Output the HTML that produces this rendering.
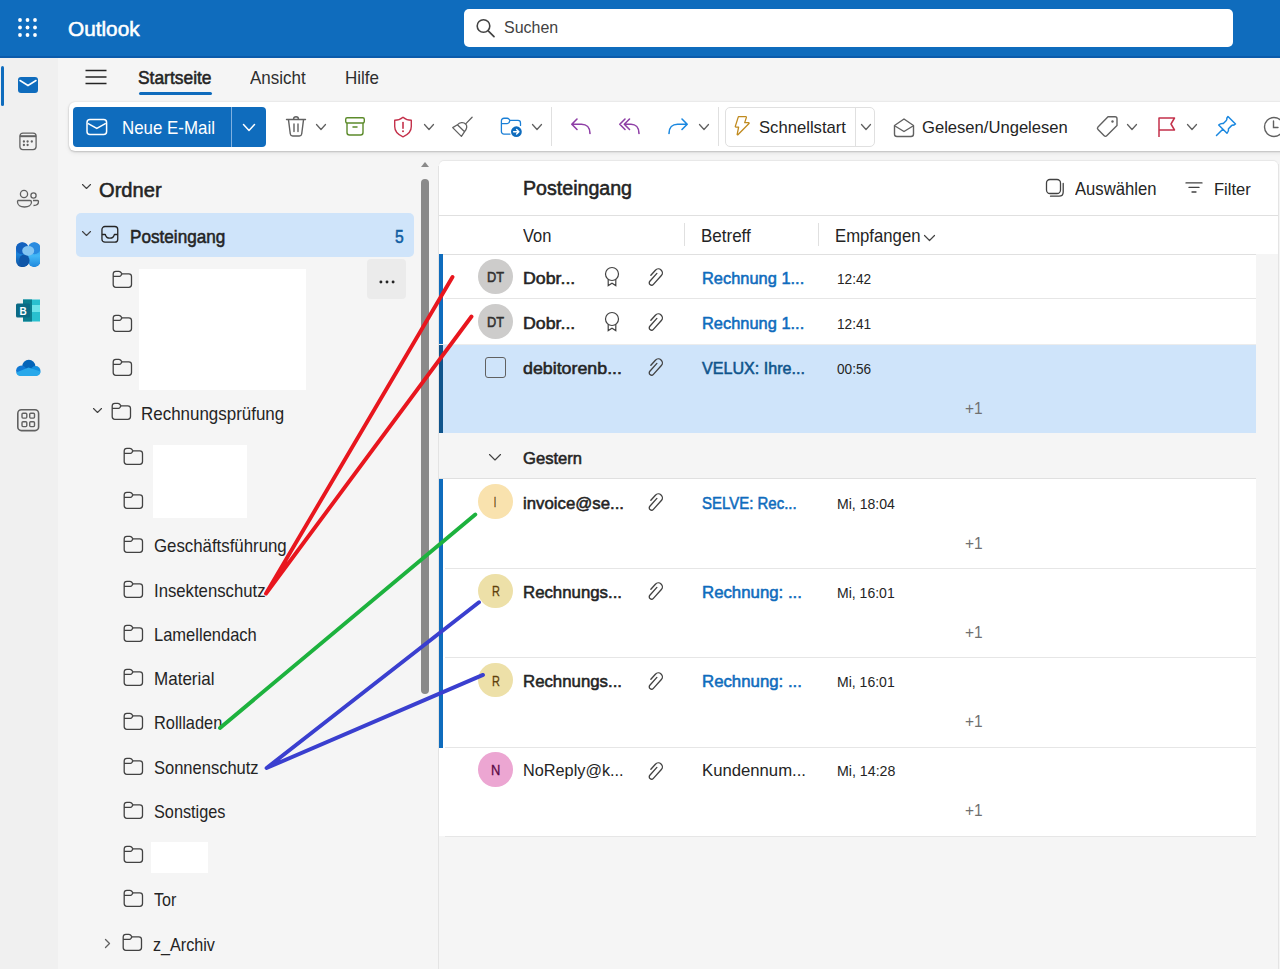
<!DOCTYPE html><html><head><meta charset="utf-8"><style>
*{box-sizing:border-box}
html,body{margin:0;padding:0}
body{width:1280px;height:969px;overflow:hidden;position:relative;background:#f5f5f5;font-family:"Liberation Sans",sans-serif}
.a{position:absolute;display:block}
.t{position:absolute;white-space:pre;transform-origin:0 0}
</style></head><body>
<div class="a" style="left:0px;top:0px;width:1280px;height:58px;background:#0f6cbd"></div>
<div class="a" style="left:0px;top:56px;width:1280px;height:2px;background:#0b5bab"></div>
<svg class="a" style="left:0px;top:0px;" width="56" height="56" viewBox="0 0 56 56" fill="none"><circle cx="20" cy="20" r="1.9" fill="#fff"/><circle cx="20" cy="27.5" r="1.9" fill="#fff"/><circle cx="20" cy="35" r="1.9" fill="#fff"/><circle cx="27.5" cy="20" r="1.9" fill="#fff"/><circle cx="27.5" cy="27.5" r="1.9" fill="#fff"/><circle cx="27.5" cy="35" r="1.9" fill="#fff"/><circle cx="35" cy="20" r="1.9" fill="#fff"/><circle cx="35" cy="27.5" r="1.9" fill="#fff"/><circle cx="35" cy="35" r="1.9" fill="#fff"/></svg>
<span class="t" style="left:67.60px;top:19px;font-size:20.0px;line-height:20.0px;font-weight:400;color:#ffffff;-webkit-text-stroke:0.55px #ffffff;transform:scale(1.0383,1.0000);transform-origin:0 17px;">Outlook</span>
<div class="a" style="left:464px;top:9px;width:769px;height:38px;background:#fff;border-radius:5px"></div>
<svg class="a" style="left:470px;top:13px;" width="30" height="30" viewBox="0 0 30 30" fill="none"><circle cx="13.5" cy="13" r="6.3" stroke="#424242" stroke-width="1.6"/><path d="M18.2 17.8 L24 23.6" stroke="#424242" stroke-width="1.7" stroke-linecap="round"/></svg>
<span class="t" style="left:503.60px;top:19px;font-size:17.0px;line-height:17.0px;font-weight:400;color:#424242;transform:scale(0.9399,1.0000);transform-origin:0 14px;">Suchen</span>
<div class="a" style="left:0px;top:58px;width:58px;height:911px;background:#f0f0f0"></div>
<div class="a" style="left:1px;top:66px;width:2.5px;height:40px;background:#0f6cbd;border-radius:2px"></div>
<svg class="a" style="left:16px;top:75px;" width="24" height="20" viewBox="0 0 24 20" fill="none"><rect x="2" y="2" width="20" height="16" rx="3" fill="#0f6cbd"/><path d="M4 5.5 L12 10.5 L20 5.5" stroke="#fff" stroke-width="1.5" fill="none" stroke-linecap="round"/></svg>
<svg class="a" style="left:17px;top:130px;" width="22" height="22" viewBox="0 0 22 22" fill="none"><rect x="2.9" y="3.2" width="16.2" height="16.4" rx="3" stroke="#616161" stroke-width="1.3"/><path d="M2.9 6.2 H19.1" stroke="#616161" stroke-width="2"/><g fill="#616161"><circle cx="6.9" cy="11.5" r="1.15"/><circle cx="10.6" cy="11.5" r="1.15"/><circle cx="14.8" cy="11.5" r="1.15"/><circle cx="6.9" cy="15" r="1.15"/><circle cx="10.6" cy="15" r="1.15"/></g></svg>
<svg class="a" style="left:15px;top:187px;" width="26" height="24" viewBox="0 0 26 24" fill="none"><circle cx="9" cy="7" r="3.6" stroke="#616161" stroke-width="1.3"/><circle cx="18.5" cy="8.5" r="2.6" stroke="#616161" stroke-width="1.3"/><path d="M3 13.5 H15 A1.5 1.5 0 0 1 16.5 15 C16.5 18 13.5 20 9.5 20 S2.5 18 2.5 15 A1.5 1.5 0 0 1 3 13.5Z" stroke="#616161" stroke-width="1.3"/><path d="M18 13.5 H22.5 A1 1 0 0 1 23.5 14.5 C23.5 17 21.5 18.5 18.5 18.5" stroke="#616161" stroke-width="1.3"/></svg>
<svg class="a" style="left:15.7px;top:241.7px;" width="24.5" height="25.2" viewBox="0 0 24.5 25.2" fill="none"><defs><linearGradient id="gl" x1="0" y1="0" x2="0" y2="1"><stop offset="0" stop-color="#1560bd"/><stop offset="0.5" stop-color="#1b82d8"/><stop offset="1" stop-color="#0d4f9e"/></linearGradient><linearGradient id="gr" x1="0" y1="0" x2="0" y2="1"><stop offset="0" stop-color="#2a8be0"/><stop offset="0.55" stop-color="#43b8f7"/><stop offset="1" stop-color="#2088dc"/></linearGradient></defs><rect x="0" y="0.3" width="12.6" height="24.8" rx="6.2" fill="url(#gl)"/><rect x="12" y="0.3" width="12.4" height="24.8" rx="6.1" fill="url(#gr)"/><circle cx="6" cy="6.3" r="5.9" fill="#1462bf"/><circle cx="18.4" cy="6.3" r="5.9" fill="#2a8be0"/><ellipse cx="8.3" cy="18.6" rx="5.2" ry="6" fill="#0f56a8"/><ellipse cx="12.2" cy="8.8" rx="6" ry="4.9" fill="#84c5f2"/></svg>
<svg class="a" style="left:15px;top:298px;" width="26" height="25" viewBox="0 0 26 25" fill="none"><rect x="8" y="1.5" width="17" height="22" fill="#29c0cf"/><rect x="17" y="7" width="8" height="7" fill="#6ce3e9"/><rect x="8" y="1.5" width="9" height="22" fill="#0c7d8e"/><rect x="1" y="5.5" width="14" height="14" rx="1.5" fill="#0b6a85"/><text x="8" y="16.5" font-family="Liberation Sans" font-weight="700" font-size="10" fill="#fff" text-anchor="middle">B</text></svg>
<svg class="a" style="left:15px;top:357px;" width="26" height="20" viewBox="0 0 26 20" fill="none"><circle cx="13.8" cy="9.3" r="6.6" fill="#0364b8"/><circle cx="6.3" cy="13.6" r="5.2" fill="#0f78d4"/><circle cx="20.6" cy="13.9" r="4.9" fill="#1490df"/><path d="M1.2 15.5 L13.5 10.5 L25.4 14.5 V15 C25.4 17.2 23.6 18.9 21.5 18.9 H5.5 C3.2 18.9 1.4 17.5 1.2 15.5 Z" fill="#28a8ea"/></svg>
<svg class="a" style="left:15px;top:408px;" width="26" height="25" viewBox="0 0 26 25" fill="none"><rect x="2.8" y="1.8" width="20.8" height="20.8" rx="3.6" stroke="#616161" stroke-width="1.6"/><g stroke="#616161" stroke-width="1.4"><rect x="7" y="5.3" width="4.8" height="4.8" rx="1"/><rect x="14.7" y="5.3" width="4.8" height="4.8" rx="1"/><rect x="7" y="13.8" width="4.8" height="4.8" rx="1"/><rect x="14.7" y="13.8" width="4.8" height="4.8" rx="1"/></g></svg>
<svg class="a" style="left:84px;top:68px;" width="24" height="18" viewBox="0 0 24 18" fill="none"><path d="M1.5 2.5 H22.5 M1.5 9 H22.5 M1.5 15.5 H22.5" stroke="#242424" stroke-width="1.4"/></svg>
<span class="t" style="left:138.00px;top:69px;font-size:18.5px;line-height:18.5px;font-weight:400;color:#242424;-webkit-text-stroke:0.55px #242424;transform:scale(0.9406,1.0000);transform-origin:0 15px;">Startseite</span>
<div class="a" style="left:139px;top:92px;width:73px;height:3px;background:#0f6cbd;border-radius:2px"></div>
<span class="t" style="left:249.70px;top:69px;font-size:18.5px;line-height:18.5px;font-weight:400;color:#2e2e2e;transform:scale(0.9166,1.0000);transform-origin:0 15px;">Ansicht</span>
<span class="t" style="left:345.00px;top:69px;font-size:18.5px;line-height:18.5px;font-weight:400;color:#2e2e2e;transform:scale(0.9185,1.0000);transform-origin:0 15px;">Hilfe</span>
<div class="a" style="left:68.7px;top:102px;width:1240px;height:49px;background:#fff;border-radius:6px;box-shadow:0 0 2px rgba(0,0,0,0.12),0 1px 2px rgba(0,0,0,0.14),0 2px 5px rgba(0,0,0,0.07)"></div>
<div class="a" style="left:73px;top:107px;width:193px;height:39.5px;background:#0f6cbd;border-radius:4px"></div>
<div class="a" style="left:230.6px;top:107px;width:1.4px;height:39.5px;background:#7fb0e0"></div>
<svg class="a" style="left:84px;top:116px;" width="26" height="22" viewBox="0 0 26 22" fill="none"><rect x="3" y="3.6" width="19.6" height="15" rx="3" stroke="#fff" stroke-width="1.5"/><path d="M3.8 7.3 L12.8 12.4 L21.8 7.3" stroke="#fff" stroke-width="1.5"/></svg>
<span class="t" style="left:121.50px;top:119px;font-size:18.5px;line-height:18.5px;font-weight:400;color:#ffffff;transform:scale(0.9127,1.0000);transform-origin:0 15px;">Neue E-Mail</span>
<svg class="a" style="left:242px;top:123px;" width="14" height="9" viewBox="-1 -1 14 9" fill="none"><path d="M0.5 0.5 L6.0 6.5 L11.5 0.5" stroke="#ffffff" stroke-width="1.5" stroke-linecap="round" stroke-linejoin="round"/></svg>
<svg class="a" style="left:284px;top:115px;" width="24" height="23" viewBox="0 0 24 23" fill="none"><path d="M2.5 4.5 H21.5 M9.5 4.3 C9.5 2.5 10.5 1.8 12 1.8 S14.5 2.5 14.5 4.3" stroke="#616161" stroke-width="1.4" stroke-linecap="round"/><path d="M4.5 4.8 L6.3 19 C6.5 20.3 7.5 21 8.7 21 H15.3 C16.5 21 17.5 20.3 17.7 19 L19.5 4.8" stroke="#616161" stroke-width="1.4"/><path d="M10 9 V16.5 M14 9 V16.5" stroke="#616161" stroke-width="1.4" stroke-linecap="round"/></svg>
<svg class="a" style="left:315px;top:123px;" width="12" height="8" viewBox="-1 -1 12 8" fill="none"><path d="M0.5 0.5 L5.0 5.5 L9.5 0.5" stroke="#616161" stroke-width="1.3" stroke-linecap="round" stroke-linejoin="round"/></svg>
<svg class="a" style="left:343px;top:116px;" width="24" height="21" viewBox="0 0 24 21" fill="none"><rect x="2.7" y="1.8" width="18.6" height="5.2" rx="1.5" stroke="#5c8b2b" stroke-width="1.4"/><path d="M4 7 V16.5 C4 18 5 19 6.5 19 H17.5 C19 19 20 18 20 16.5 V7" stroke="#5c8b2b" stroke-width="1.4"/><path d="M10 11 H14" stroke="#5c8b2b" stroke-width="1.5" stroke-linecap="round"/></svg>
<svg class="a" style="left:391px;top:115px;" width="24" height="24" viewBox="0 0 24 24" fill="none"><path d="M12 2.2 C14.5 4.3 17.3 5.3 20.3 5.3 V11.5 C20.3 16.3 17.3 19.6 12 21.8 C6.7 19.6 3.7 16.3 3.7 11.5 V5.3 C6.7 5.3 9.5 4.3 12 2.2Z" stroke="#c4314b" stroke-width="1.4" stroke-linejoin="round"/><path d="M12 7.5 V13.2" stroke="#c4314b" stroke-width="1.6" stroke-linecap="round"/><circle cx="12" cy="16.3" r="1" fill="#c4314b"/></svg>
<svg class="a" style="left:423px;top:123px;" width="12" height="8" viewBox="-1 -1 12 8" fill="none"><path d="M0.5 0.5 L5.0 5.5 L9.5 0.5" stroke="#616161" stroke-width="1.3" stroke-linecap="round" stroke-linejoin="round"/></svg>
<svg class="a" style="left:450px;top:114px;" width="26" height="25" viewBox="0 0 26 25" fill="none"><path d="M22.1 3.3 L15.9 9.6" stroke="#616161" stroke-width="1.3" stroke-linecap="round"/><path d="M2.7 13.6 L7.4 10.8 C9.5 8.3 13.5 7.6 15.8 10.2 C17.6 12.4 16.4 15.4 14.6 17.7 L11.4 22.4 Z M7.4 10.8 L14.6 17.7" stroke="#616161" stroke-width="1.3" stroke-linejoin="round"/></svg>
<svg class="a" style="left:499px;top:115px;" width="26" height="25" viewBox="0 0 26 25" fill="none"><path d="M10.9 19.2 H5 C3.5 19.2 2.4 18 2.4 16.5 V6 C2.4 4.5 3.5 3.25 5 3.25 H8.2 C8.9 3.25 9.5 3.6 10 4.1 L10.9 5.4 H19 C20.4 5.4 21.5 6.5 21.5 8 V10.4 M2.4 8.6 H8.2 C8.9 8.6 9.5 8.3 10 7.7 L10.9 5.4" stroke="#1b7fd6" stroke-width="1.3" stroke-linejoin="round" stroke-linecap="round"/><circle cx="17.4" cy="16.7" r="5.4" fill="#0f6cbd"/><path d="M14.6 16.7 H19.8 M17.6 14.4 L19.9 16.7 L17.6 19" stroke="#fff" stroke-width="1.4" stroke-linecap="round" stroke-linejoin="round"/></svg>
<svg class="a" style="left:530.5px;top:123px;" width="12" height="8" viewBox="-1 -1 12 8" fill="none"><path d="M0.5 0.5 L5.0 5.5 L9.5 0.5" stroke="#616161" stroke-width="1.3" stroke-linecap="round" stroke-linejoin="round"/></svg>
<div class="a" style="left:551px;top:107px;width:1px;height:39px;background:#e0e0e0"></div>
<svg class="a" style="left:569px;top:116px;" width="24" height="20" viewBox="0 0 24 20" fill="none"><path d="M8 3 L2.8 8.3 L8 13.5 M3.2 8.3 H12.5 C17.5 8.3 21 11.5 21 17.5" stroke="#8e3ea6" stroke-width="1.6" stroke-linecap="round" stroke-linejoin="round"/></svg>
<svg class="a" style="left:618px;top:116px;" width="24" height="20" viewBox="0 0 24 20" fill="none"><path d="M7 3 L1.8 8.3 L7 13.5 M11.5 3 L6.3 8.3 L11.5 13.5 M6.7 8.3 H13 C17.5 8.3 21 11.5 21 17.5" stroke="#8e3ea6" stroke-width="1.6" stroke-linecap="round" stroke-linejoin="round"/></svg>
<svg class="a" style="left:666px;top:116px;" width="24" height="20" viewBox="0 0 24 20" fill="none"><path d="M16 3 L21.2 8.3 L16 13.5 M20.8 8.3 H11.5 C6.5 8.3 3 11.5 3 17.5" stroke="#1b88e0" stroke-width="1.6" stroke-linecap="round" stroke-linejoin="round"/></svg>
<svg class="a" style="left:698px;top:123px;" width="12" height="8" viewBox="-1 -1 12 8" fill="none"><path d="M0.5 0.5 L5.0 5.5 L9.5 0.5" stroke="#616161" stroke-width="1.3" stroke-linecap="round" stroke-linejoin="round"/></svg>
<div class="a" style="left:718px;top:107px;width:1px;height:39px;background:#e0e0e0"></div>
<div class="a" style="left:725px;top:107px;width:150px;height:39.5px;border:1px solid #e0e0e0;border-radius:5px;background:#fff"></div>
<div class="a" style="left:855px;top:108px;width:1px;height:37.5px;background:#e0e0e0"></div>
<svg class="a" style="left:732px;top:114px;" width="22" height="24" viewBox="0 0 22 24" fill="none"><path d="M6.4 2.6 H13.8 C14.2 2.6 14.5 3 14.4 3.4 L12.7 8.6 H16.6 C17.1 8.6 17.3 9.2 17 9.5 L5.9 20.7 C5.6 21 5.1 20.7 5.2 20.3 L6.6 13.1 H3.9 C3.5 13.1 3.2 12.8 3.3 12.4 Z" stroke="#c08a1e" stroke-width="1.3" stroke-linejoin="round"/></svg>
<span class="t" style="left:759.00px;top:119px;font-size:17.0px;line-height:17.0px;font-weight:400;color:#242424;transform:scale(0.9795,1.0000);transform-origin:0 14px;">Schnellstart</span>
<svg class="a" style="left:859.6px;top:123px;" width="12" height="8" viewBox="-1 -1 12 8" fill="none"><path d="M0.5 0.5 L5.0 5.5 L9.5 0.5" stroke="#616161" stroke-width="1.3" stroke-linecap="round" stroke-linejoin="round"/></svg>
<svg class="a" style="left:892px;top:116px;" width="24" height="23" viewBox="0 0 24 23" fill="none"><path d="M2.5 9.5 L12 3 L21.5 9.5 V18 C21.5 19.5 20.5 20.5 19 20.5 H5 C3.5 20.5 2.5 19.5 2.5 18 Z" stroke="#616161" stroke-width="1.4" stroke-linejoin="round"/><path d="M3 10 L12 15.5 L21 10" stroke="#616161" stroke-width="1.4"/></svg>
<span class="t" style="left:922.00px;top:119px;font-size:17.0px;line-height:17.0px;font-weight:400;color:#242424;transform:scale(0.9764,1.0000);transform-origin:0 14px;">Gelesen/Ungelesen</span>
<svg class="a" style="left:1095px;top:114px;" width="25" height="24" viewBox="0 0 25 24" fill="none"><path d="M13 2.8 H20 C21.2 2.8 22 3.6 22 4.8 V11.5 L11.7 21.8 C11 22.5 9.9 22.5 9.2 21.8 L3 15.6 C2.3 14.9 2.3 13.8 3 13.1 Z" stroke="#616161" stroke-width="1.4" stroke-linejoin="round"/><circle cx="17.5" cy="7.5" r="1.2" fill="#616161"/></svg>
<svg class="a" style="left:1126px;top:123px;" width="12" height="8" viewBox="-1 -1 12 8" fill="none"><path d="M0.5 0.5 L5.0 5.5 L9.5 0.5" stroke="#616161" stroke-width="1.3" stroke-linecap="round" stroke-linejoin="round"/></svg>
<svg class="a" style="left:1156px;top:115px;" width="22" height="24" viewBox="0 0 22 24" fill="none"><path d="M3 22 V3 H18.5 L15 9 L18.5 15 H3" stroke="#c4314b" stroke-width="1.5" stroke-linejoin="round"/></svg>
<svg class="a" style="left:1186px;top:123px;" width="12" height="8" viewBox="-1 -1 12 8" fill="none"><path d="M0.5 0.5 L5.0 5.5 L9.5 0.5" stroke="#616161" stroke-width="1.3" stroke-linecap="round" stroke-linejoin="round"/></svg>
<svg class="a" style="left:1214px;top:114px;" width="24" height="24" viewBox="0 0 24 24" fill="none"><path d="M14 2.5 L21.5 10 L19.8 11.2 C19 11 18 11.2 17.3 11.9 L14.5 14.7 C14.8 16.3 14.3 18 13 19.3 L4.7 11 C6 9.7 7.7 9.2 9.3 9.5 L12.1 6.7 C12.8 6 13 5 12.8 4.2 Z M8.8 15.2 L2.5 21.5" stroke="#1b88e0" stroke-width="1.5" stroke-linejoin="round" stroke-linecap="round"/></svg>
<svg class="a" style="left:1262px;top:115px;" width="24" height="24" viewBox="0 0 24 24" fill="none"><circle cx="12" cy="12" r="9.5" stroke="#616161" stroke-width="1.4"/><path d="M11.5 6 V12.5 H16" stroke="#616161" stroke-width="1.4" stroke-linecap="round"/></svg>
<svg class="a" style="left:81.3px;top:183.2px;" width="11" height="7" viewBox="-1 -1 11 7" fill="none"><path d="M0.5 0.5 L4.5 4.5 L8.5 0.5" stroke="#424242" stroke-width="1.1" stroke-linecap="round" stroke-linejoin="round"/></svg>
<span class="t" style="left:99.20px;top:180px;font-size:20.0px;line-height:20.0px;font-weight:400;color:#242424;-webkit-text-stroke:0.55px #242424;transform:scale(1.0058,1.0000);transform-origin:0 17px;">Ordner</span>
<div class="a" style="left:76px;top:213px;width:338px;height:43.5px;background:#cfe4fa;border-radius:5px"></div>
<svg class="a" style="left:81.3px;top:229.6px;" width="11" height="7" viewBox="-1 -1 11 7" fill="none"><path d="M0.5 0.5 L4.5 4.5 L8.5 0.5" stroke="#424242" stroke-width="1.1" stroke-linecap="round" stroke-linejoin="round"/></svg>
<svg class="a" style="left:99px;top:224px;" width="22" height="22" viewBox="0 0 22 22" fill="none"><rect x="2.95" y="2.5" width="15.8" height="15.7" rx="3" stroke="#242424" stroke-width="1.3"/><path d="M2.95 10.5 H6.3 C6.9 12.8 8.6 14.2 10.85 14.2 S14.8 12.8 15.4 10.5 H18.75" stroke="#242424" stroke-width="1.3" stroke-linejoin="round"/></svg>
<span class="t" style="left:130.40px;top:228px;font-size:18.5px;line-height:18.5px;font-weight:400;color:#242424;-webkit-text-stroke:0.55px #242424;transform:scale(0.9265,1.0000);transform-origin:0 15px;">Posteingang</span>
<span class="t" style="left:395.30px;top:228px;font-size:18.5px;line-height:18.5px;font-weight:400;color:#115ea3;-webkit-text-stroke:0.55px #115ea3;transform:scale(0.8458,1.0000);transform-origin:0 15px;">5</span>
<svg class="a" style="left:112.3px;top:269.8px;" width="21" height="19" viewBox="0 0 21 19" fill="none"><path d="M1.2 4 C1.2 2.5 2.4 1.3 3.9 1.3 H6.9 C7.5 1.3 8.1 1.6 8.5 2 L10 3.8 H16.8 C18.3 3.8 19.5 5 19.5 6.5 V14.6 C19.5 16.1 18.3 17.3 16.8 17.3 H3.9 C2.4 17.3 1.2 16.1 1.2 14.6 Z M1.2 6.3 H7.5 C8 6.3 8.5 6.1 8.8 5.7 L10 3.8" stroke="#424242" stroke-width="1.3" stroke-linejoin="round"/></svg>
<svg class="a" style="left:112.3px;top:314.05px;" width="21" height="19" viewBox="0 0 21 19" fill="none"><path d="M1.2 4 C1.2 2.5 2.4 1.3 3.9 1.3 H6.9 C7.5 1.3 8.1 1.6 8.5 2 L10 3.8 H16.8 C18.3 3.8 19.5 5 19.5 6.5 V14.6 C19.5 16.1 18.3 17.3 16.8 17.3 H3.9 C2.4 17.3 1.2 16.1 1.2 14.6 Z M1.2 6.3 H7.5 C8 6.3 8.5 6.1 8.8 5.7 L10 3.8" stroke="#424242" stroke-width="1.3" stroke-linejoin="round"/></svg>
<svg class="a" style="left:112.3px;top:358.3px;" width="21" height="19" viewBox="0 0 21 19" fill="none"><path d="M1.2 4 C1.2 2.5 2.4 1.3 3.9 1.3 H6.9 C7.5 1.3 8.1 1.6 8.5 2 L10 3.8 H16.8 C18.3 3.8 19.5 5 19.5 6.5 V14.6 C19.5 16.1 18.3 17.3 16.8 17.3 H3.9 C2.4 17.3 1.2 16.1 1.2 14.6 Z M1.2 6.3 H7.5 C8 6.3 8.5 6.1 8.8 5.7 L10 3.8" stroke="#424242" stroke-width="1.3" stroke-linejoin="round"/></svg>
<div class="a" style="left:139px;top:268.5px;width:166.8px;height:121px;background:#fff"></div>
<div class="a" style="left:367.2px;top:259px;width:39px;height:39.5px;background:#ebebeb;border-radius:4px"></div>
<svg class="a" style="left:376px;top:277.6px;" width="22" height="8" viewBox="0 0 22 8" fill="none"><circle cx="4.9" cy="4" r="1.45" fill="#242424"/><circle cx="11" cy="4" r="1.45" fill="#242424"/><circle cx="17.1" cy="4" r="1.45" fill="#242424"/></svg>
<svg class="a" style="left:92.3px;top:406.95px;" width="11" height="7" viewBox="-1 -1 11 7" fill="none"><path d="M0.5 0.5 L4.5 4.5 L8.5 0.5" stroke="#424242" stroke-width="1.1" stroke-linecap="round" stroke-linejoin="round"/></svg>
<svg class="a" style="left:110.8px;top:402.05px;" width="21" height="19" viewBox="0 0 21 19" fill="none"><path d="M1.2 4 C1.2 2.5 2.4 1.3 3.9 1.3 H6.9 C7.5 1.3 8.1 1.6 8.5 2 L10 3.8 H16.8 C18.3 3.8 19.5 5 19.5 6.5 V14.6 C19.5 16.1 18.3 17.3 16.8 17.3 H3.9 C2.4 17.3 1.2 16.1 1.2 14.6 Z M1.2 6.3 H7.5 C8 6.3 8.5 6.1 8.8 5.7 L10 3.8" stroke="#424242" stroke-width="1.3" stroke-linejoin="round"/></svg>
<span class="t" style="left:141.10px;top:405px;font-size:18.5px;line-height:18.5px;font-weight:400;color:#242424;transform:scale(0.9159,1.0000);transform-origin:0 15px;">Rechnungsprüfung</span>
<svg class="a" style="left:122.8px;top:446.8px;" width="21" height="19" viewBox="0 0 21 19" fill="none"><path d="M1.2 4 C1.2 2.5 2.4 1.3 3.9 1.3 H6.9 C7.5 1.3 8.1 1.6 8.5 2 L10 3.8 H16.8 C18.3 3.8 19.5 5 19.5 6.5 V14.6 C19.5 16.1 18.3 17.3 16.8 17.3 H3.9 C2.4 17.3 1.2 16.1 1.2 14.6 Z M1.2 6.3 H7.5 C8 6.3 8.5 6.1 8.8 5.7 L10 3.8" stroke="#424242" stroke-width="1.3" stroke-linejoin="round"/></svg>
<svg class="a" style="left:122.8px;top:491.05px;" width="21" height="19" viewBox="0 0 21 19" fill="none"><path d="M1.2 4 C1.2 2.5 2.4 1.3 3.9 1.3 H6.9 C7.5 1.3 8.1 1.6 8.5 2 L10 3.8 H16.8 C18.3 3.8 19.5 5 19.5 6.5 V14.6 C19.5 16.1 18.3 17.3 16.8 17.3 H3.9 C2.4 17.3 1.2 16.1 1.2 14.6 Z M1.2 6.3 H7.5 C8 6.3 8.5 6.1 8.8 5.7 L10 3.8" stroke="#424242" stroke-width="1.3" stroke-linejoin="round"/></svg>
<svg class="a" style="left:122.8px;top:535.3px;" width="21" height="19" viewBox="0 0 21 19" fill="none"><path d="M1.2 4 C1.2 2.5 2.4 1.3 3.9 1.3 H6.9 C7.5 1.3 8.1 1.6 8.5 2 L10 3.8 H16.8 C18.3 3.8 19.5 5 19.5 6.5 V14.6 C19.5 16.1 18.3 17.3 16.8 17.3 H3.9 C2.4 17.3 1.2 16.1 1.2 14.6 Z M1.2 6.3 H7.5 C8 6.3 8.5 6.1 8.8 5.7 L10 3.8" stroke="#424242" stroke-width="1.3" stroke-linejoin="round"/></svg>
<svg class="a" style="left:122.8px;top:579.55px;" width="21" height="19" viewBox="0 0 21 19" fill="none"><path d="M1.2 4 C1.2 2.5 2.4 1.3 3.9 1.3 H6.9 C7.5 1.3 8.1 1.6 8.5 2 L10 3.8 H16.8 C18.3 3.8 19.5 5 19.5 6.5 V14.6 C19.5 16.1 18.3 17.3 16.8 17.3 H3.9 C2.4 17.3 1.2 16.1 1.2 14.6 Z M1.2 6.3 H7.5 C8 6.3 8.5 6.1 8.8 5.7 L10 3.8" stroke="#424242" stroke-width="1.3" stroke-linejoin="round"/></svg>
<svg class="a" style="left:122.8px;top:623.8px;" width="21" height="19" viewBox="0 0 21 19" fill="none"><path d="M1.2 4 C1.2 2.5 2.4 1.3 3.9 1.3 H6.9 C7.5 1.3 8.1 1.6 8.5 2 L10 3.8 H16.8 C18.3 3.8 19.5 5 19.5 6.5 V14.6 C19.5 16.1 18.3 17.3 16.8 17.3 H3.9 C2.4 17.3 1.2 16.1 1.2 14.6 Z M1.2 6.3 H7.5 C8 6.3 8.5 6.1 8.8 5.7 L10 3.8" stroke="#424242" stroke-width="1.3" stroke-linejoin="round"/></svg>
<svg class="a" style="left:122.8px;top:668.05px;" width="21" height="19" viewBox="0 0 21 19" fill="none"><path d="M1.2 4 C1.2 2.5 2.4 1.3 3.9 1.3 H6.9 C7.5 1.3 8.1 1.6 8.5 2 L10 3.8 H16.8 C18.3 3.8 19.5 5 19.5 6.5 V14.6 C19.5 16.1 18.3 17.3 16.8 17.3 H3.9 C2.4 17.3 1.2 16.1 1.2 14.6 Z M1.2 6.3 H7.5 C8 6.3 8.5 6.1 8.8 5.7 L10 3.8" stroke="#424242" stroke-width="1.3" stroke-linejoin="round"/></svg>
<svg class="a" style="left:122.8px;top:712.3px;" width="21" height="19" viewBox="0 0 21 19" fill="none"><path d="M1.2 4 C1.2 2.5 2.4 1.3 3.9 1.3 H6.9 C7.5 1.3 8.1 1.6 8.5 2 L10 3.8 H16.8 C18.3 3.8 19.5 5 19.5 6.5 V14.6 C19.5 16.1 18.3 17.3 16.8 17.3 H3.9 C2.4 17.3 1.2 16.1 1.2 14.6 Z M1.2 6.3 H7.5 C8 6.3 8.5 6.1 8.8 5.7 L10 3.8" stroke="#424242" stroke-width="1.3" stroke-linejoin="round"/></svg>
<svg class="a" style="left:122.8px;top:756.55px;" width="21" height="19" viewBox="0 0 21 19" fill="none"><path d="M1.2 4 C1.2 2.5 2.4 1.3 3.9 1.3 H6.9 C7.5 1.3 8.1 1.6 8.5 2 L10 3.8 H16.8 C18.3 3.8 19.5 5 19.5 6.5 V14.6 C19.5 16.1 18.3 17.3 16.8 17.3 H3.9 C2.4 17.3 1.2 16.1 1.2 14.6 Z M1.2 6.3 H7.5 C8 6.3 8.5 6.1 8.8 5.7 L10 3.8" stroke="#424242" stroke-width="1.3" stroke-linejoin="round"/></svg>
<svg class="a" style="left:122.8px;top:800.8px;" width="21" height="19" viewBox="0 0 21 19" fill="none"><path d="M1.2 4 C1.2 2.5 2.4 1.3 3.9 1.3 H6.9 C7.5 1.3 8.1 1.6 8.5 2 L10 3.8 H16.8 C18.3 3.8 19.5 5 19.5 6.5 V14.6 C19.5 16.1 18.3 17.3 16.8 17.3 H3.9 C2.4 17.3 1.2 16.1 1.2 14.6 Z M1.2 6.3 H7.5 C8 6.3 8.5 6.1 8.8 5.7 L10 3.8" stroke="#424242" stroke-width="1.3" stroke-linejoin="round"/></svg>
<svg class="a" style="left:122.8px;top:845.05px;" width="21" height="19" viewBox="0 0 21 19" fill="none"><path d="M1.2 4 C1.2 2.5 2.4 1.3 3.9 1.3 H6.9 C7.5 1.3 8.1 1.6 8.5 2 L10 3.8 H16.8 C18.3 3.8 19.5 5 19.5 6.5 V14.6 C19.5 16.1 18.3 17.3 16.8 17.3 H3.9 C2.4 17.3 1.2 16.1 1.2 14.6 Z M1.2 6.3 H7.5 C8 6.3 8.5 6.1 8.8 5.7 L10 3.8" stroke="#424242" stroke-width="1.3" stroke-linejoin="round"/></svg>
<svg class="a" style="left:122.8px;top:889.3px;" width="21" height="19" viewBox="0 0 21 19" fill="none"><path d="M1.2 4 C1.2 2.5 2.4 1.3 3.9 1.3 H6.9 C7.5 1.3 8.1 1.6 8.5 2 L10 3.8 H16.8 C18.3 3.8 19.5 5 19.5 6.5 V14.6 C19.5 16.1 18.3 17.3 16.8 17.3 H3.9 C2.4 17.3 1.2 16.1 1.2 14.6 Z M1.2 6.3 H7.5 C8 6.3 8.5 6.1 8.8 5.7 L10 3.8" stroke="#424242" stroke-width="1.3" stroke-linejoin="round"/></svg>
<div class="a" style="left:153px;top:444.7px;width:93.5px;height:73.5px;background:#fff"></div>
<span class="t" style="left:153.70px;top:537px;font-size:18.5px;line-height:18.5px;font-weight:400;color:#242424;transform:scale(0.9087,1.0000);transform-origin:0 15px;">Geschäftsführung</span>
<span class="t" style="left:153.70px;top:582px;font-size:18.5px;line-height:18.5px;font-weight:400;color:#242424;transform:scale(0.9036,1.0000);transform-origin:0 15px;">Insektenschutz</span>
<span class="t" style="left:154.20px;top:626px;font-size:18.5px;line-height:18.5px;font-weight:400;color:#242424;transform:scale(0.8924,1.0000);transform-origin:0 15px;">Lamellendach</span>
<span class="t" style="left:154.20px;top:670px;font-size:18.5px;line-height:18.5px;font-weight:400;color:#242424;transform:scale(0.9209,1.0000);transform-origin:0 15px;">Material</span>
<span class="t" style="left:154.20px;top:714px;font-size:18.5px;line-height:18.5px;font-weight:400;color:#242424;transform:scale(0.8856,1.0000);transform-origin:0 15px;">Rollladen</span>
<span class="t" style="left:154.20px;top:759px;font-size:18.5px;line-height:18.5px;font-weight:400;color:#242424;transform:scale(0.8921,1.0000);transform-origin:0 15px;">Sonnenschutz</span>
<span class="t" style="left:154.20px;top:803px;font-size:18.5px;line-height:18.5px;font-weight:400;color:#242424;transform:scale(0.8787,1.0000);transform-origin:0 15px;">Sonstiges</span>
<div class="a" style="left:151.3px;top:841.8px;width:56.7px;height:31px;background:#fff"></div>
<span class="t" style="left:154.20px;top:891px;font-size:18.5px;line-height:18.5px;font-weight:400;color:#242424;transform:scale(0.8678,1.0000);transform-origin:0 15px;">Tor</span>
<svg class="a" style="left:103px;top:937.75px;" width="9" height="11" viewBox="0 0 9 11" fill="none"><path d="M2.5 1.5 L6.5 5.5 L2.5 9.5" stroke="#616161" stroke-width="1.3" stroke-linecap="round" stroke-linejoin="round"/></svg>
<svg class="a" style="left:121.8px;top:933.05px;" width="21" height="19" viewBox="0 0 21 19" fill="none"><path d="M1.2 4 C1.2 2.5 2.4 1.3 3.9 1.3 H6.9 C7.5 1.3 8.1 1.6 8.5 2 L10 3.8 H16.8 C18.3 3.8 19.5 5 19.5 6.5 V14.6 C19.5 16.1 18.3 17.3 16.8 17.3 H3.9 C2.4 17.3 1.2 16.1 1.2 14.6 Z M1.2 6.3 H7.5 C8 6.3 8.5 6.1 8.8 5.7 L10 3.8" stroke="#424242" stroke-width="1.3" stroke-linejoin="round"/></svg>
<span class="t" style="left:152.50px;top:936px;font-size:18.5px;line-height:18.5px;font-weight:400;color:#242424;transform:scale(0.8725,1.0000);transform-origin:0 15px;">z_Archiv</span>
<svg class="a" style="left:420px;top:160px;" width="10" height="8" viewBox="0 0 10 8" fill="none"><path d="M1 7 L5 2 L9 7Z" fill="#8a8a8a"/></svg>
<div class="a" style="left:421.3px;top:178.5px;width:7.6px;height:515px;background:#8a8a8a;border-radius:4px"></div>
<div class="a" style="left:437.5px;top:166px;width:1.2px;height:803px;background:#e4e4e4"></div>
<div class="a" style="left:438.6px;top:160.8px;width:839.2px;height:675.5px;background:#fff;border-top-right-radius:5px;border-top-left-radius:5px;box-shadow:0 -0.5px 1px rgba(0,0,0,0.06)"></div>
<div class="a" style="left:438.6px;top:836px;width:840px;height:133px;background:#f5f5f5"></div>
<span class="t" style="left:523.00px;top:178px;font-size:20.0px;line-height:20.0px;font-weight:400;color:#242424;-webkit-text-stroke:0.55px #242424;transform:scale(0.9802,1.0000);transform-origin:0 17px;">Posteingang</span>
<svg class="a" style="left:1044px;top:177px;" width="22" height="22" viewBox="0 0 22 22" fill="none"><rect x="2.5" y="2.5" width="14" height="14" rx="3.5" stroke="#424242" stroke-width="1.3"/><path d="M19.2 6.5 V15 C19.2 17.5 17.5 19.2 15 19.2 H6.5" stroke="#424242" stroke-width="1.3" stroke-linecap="round"/></svg>
<span class="t" style="left:1075.00px;top:180px;font-size:18.5px;line-height:18.5px;font-weight:400;color:#242424;transform:scale(0.8994,1.0000);transform-origin:0 15px;">Auswählen</span>
<svg class="a" style="left:1183px;top:180px;" width="22" height="16" viewBox="0 0 22 16" fill="none"><path d="M3 2.9 H19 M6 7.4 H16 M9 12 H13" stroke="#424242" stroke-width="1.3" stroke-linecap="round"/></svg>
<span class="t" style="left:1214.00px;top:181px;font-size:17.0px;line-height:17.0px;font-weight:400;color:#242424;transform:scale(0.9716,1.0000);transform-origin:0 14px;">Filter</span>
<div class="a" style="left:438.6px;top:215px;width:840px;height:1px;background:#e0e0e0"></div>
<span class="t" style="left:523.00px;top:227px;font-size:18.5px;line-height:18.5px;font-weight:400;color:#242424;transform:scale(0.8904,1.0000);transform-origin:0 15px;">Von</span>
<div class="a" style="left:684px;top:223px;width:1px;height:22.5px;background:#e0e0e0"></div>
<span class="t" style="left:701.00px;top:227px;font-size:18.5px;line-height:18.5px;font-weight:400;color:#242424;transform:scale(0.9187,1.0000);transform-origin:0 15px;">Betreff</span>
<div class="a" style="left:818px;top:223px;width:1px;height:22.5px;background:#e0e0e0"></div>
<span class="t" style="left:834.70px;top:227px;font-size:18.5px;line-height:18.5px;font-weight:400;color:#242424;transform:scale(0.9035,1.0000);transform-origin:0 15px;">Empfangen</span>
<svg class="a" style="left:923px;top:234px;" width="13" height="8" viewBox="-1 -1 13 8" fill="none"><path d="M0.5 0.5 L5.5 5.5 L10.5 0.5" stroke="#424242" stroke-width="1.2" stroke-linecap="round" stroke-linejoin="round"/></svg>
<div class="a" style="left:438.6px;top:253.6px;width:840px;height:1px;background:#e0e0e0"></div>
<div class="a" style="left:1256px;top:254px;width:22px;height:582px;background:#f5f5f5"></div>
<div class="a" style="left:439px;top:254px;width:4.2px;height:45px;background:#0f6cbd"></div>
<div class="a" style="left:445px;top:298px;width:811px;height:1px;background:#e6e6e6"></div>
<div class="a" style="left:439px;top:299px;width:4.2px;height:46px;background:#0f6cbd"></div>
<div class="a" style="left:439px;top:345px;width:817px;height:88px;background:#cfe4fa"></div>
<div class="a" style="left:439px;top:345px;width:4.2px;height:88px;background:#0f548c"></div>
<div class="a" style="left:439px;top:344px;width:817px;height:1px;background:#ececec"></div>
<div class="a" style="left:439px;top:433px;width:817px;height:45px;background:#f5f5f5"></div>
<div class="a" style="left:439px;top:478px;width:817px;height:1px;background:#e0e0e0"></div>
<svg class="a" style="left:488px;top:453.2px;" width="14" height="8.5" viewBox="-1 -1 14 8.5" fill="none"><path d="M0.5 0.5 L6.0 6.0 L11.5 0.5" stroke="#424242" stroke-width="1.15" stroke-linecap="round" stroke-linejoin="round"/></svg>
<span class="t" style="left:523.00px;top:450px;font-size:17.0px;line-height:17.0px;font-weight:400;color:#242424;-webkit-text-stroke:0.55px #242424;transform:scale(0.9757,1.0000);transform-origin:0 14px;">Gestern</span>
<div class="a" style="left:439px;top:479px;width:4.2px;height:90px;background:#0f6cbd"></div>
<div class="a" style="left:445px;top:568px;width:811px;height:1px;background:#e6e6e6"></div>
<div class="a" style="left:439px;top:569px;width:4.2px;height:89px;background:#0f6cbd"></div>
<div class="a" style="left:445px;top:657px;width:811px;height:1px;background:#e6e6e6"></div>
<div class="a" style="left:439px;top:658px;width:4.2px;height:90px;background:#0f6cbd"></div>
<div class="a" style="left:445px;top:747px;width:811px;height:1px;background:#e6e6e6"></div>
<div class="a" style="left:445px;top:836px;width:811px;height:1px;background:#e6e6e6"></div>
<div class="a" style="left:1277.7px;top:164px;width:1.4px;height:805px;background:#e4e4e4"></div>
<div class="a" style="left:478.1px;top:259.1px;width:34.6px;height:34.6px;border-radius:50%;background:#cdcccb"></div>
<span class="t" style="left:487.00px;top:270px;font-size:14.5px;line-height:14.5px;font-weight:400;color:#323130;-webkit-text-stroke:0.55px #323130;transform:scale(0.8795,1.0000);transform-origin:0 12px;">DT</span>
<div class="a" style="left:478.1px;top:304.3px;width:34.6px;height:34.6px;border-radius:50%;background:#cdcccb"></div>
<span class="t" style="left:487.00px;top:315px;font-size:14.5px;line-height:14.5px;font-weight:400;color:#323130;-webkit-text-stroke:0.55px #323130;transform:scale(0.8795,1.0000);transform-origin:0 12px;">DT</span>
<div class="a" style="left:478.1px;top:484.0px;width:34.6px;height:34.6px;border-radius:50%;background:#f9e2ae"></div>
<span class="t" style="left:494.40px;top:495px;font-size:14.5px;line-height:14.5px;font-weight:400;color:#5e3f06;-webkit-text-stroke:0.55px #5e3f06;transform:scale(0.4962,1.0000);transform-origin:0 12px;">I</span>
<div class="a" style="left:478.1px;top:573.7px;width:34.6px;height:34.6px;border-radius:50%;background:#ede0a8"></div>
<span class="t" style="left:491.60px;top:584px;font-size:14.5px;line-height:14.5px;font-weight:400;color:#5e400c;-webkit-text-stroke:0.3px #5e400c;transform:scale(0.7546,1.0000);transform-origin:0 12px;">R</span>
<div class="a" style="left:478.1px;top:662.9px;width:34.6px;height:34.6px;border-radius:50%;background:#ede0a8"></div>
<span class="t" style="left:491.60px;top:674px;font-size:14.5px;line-height:14.5px;font-weight:400;color:#5e400c;-webkit-text-stroke:0.3px #5e400c;transform:scale(0.7546,1.0000);transform-origin:0 12px;">R</span>
<div class="a" style="left:478.1px;top:752.2px;width:34.6px;height:34.6px;border-radius:50%;background:#eca6d2"></div>
<span class="t" style="left:490.50px;top:763px;font-size:14.5px;line-height:14.5px;font-weight:400;color:#5c0a47;-webkit-text-stroke:0.3px #5c0a47;transform:scale(0.8883,1.0000);transform-origin:0 12px;">N</span>
<div class="a" style="left:485px;top:357px;width:20.5px;height:20.5px;border:1.3px solid #616161;border-radius:3px;background:transparent"></div>
<span class="t" style="left:523.00px;top:270px;font-size:17.0px;line-height:17.0px;font-weight:400;color:#242424;-webkit-text-stroke:0.55px #242424;transform:scale(1.0443,1.0000);transform-origin:0 14px;">Dobr...</span>
<span class="t" style="left:701.50px;top:270px;font-size:17.0px;line-height:17.0px;font-weight:400;color:#0f6cbd;-webkit-text-stroke:0.55px #0f6cbd;transform:scale(0.9654,1.0000);transform-origin:0 14px;">Rechnung 1...</span>
<span class="t" style="left:836.80px;top:271px;font-size:16.0px;line-height:16.0px;font-weight:400;color:#242424;transform:scale(0.8543,0.9167);transform-origin:0 13px;">12:42</span>
<svg class="a" style="left:601px;top:266px;" width="22" height="24" viewBox="0 0 22 24" fill="none"><circle cx="11" cy="8" r="6.5" stroke="#424242" stroke-width="1.2"/><path d="M7.2 13.3 V19.6 L11 17.2 L14.8 19.6 V13.3" stroke="#424242" stroke-width="1.2" stroke-linejoin="miter"/></svg>
<svg class="a" style="left:644px;top:265px;" width="24" height="24" viewBox="0 0 24 24" fill="none"><g transform="translate(10.4 12.3) rotate(42) scale(1.08)"><path d="M-3.7 0.8 V-5.5 A3.7 3.7 0 0 1 3.7 -5.5 V5.5 A2.2 2.2 0 0 1 -0.7 5.5 V-4.2" stroke="#424242" stroke-width="1.25" stroke-linecap="round"/></g></svg>
<span class="t" style="left:523.00px;top:315px;font-size:17.0px;line-height:17.0px;font-weight:400;color:#242424;-webkit-text-stroke:0.55px #242424;transform:scale(1.0443,1.0000);transform-origin:0 14px;">Dobr...</span>
<span class="t" style="left:701.50px;top:315px;font-size:17.0px;line-height:17.0px;font-weight:400;color:#0f6cbd;-webkit-text-stroke:0.55px #0f6cbd;transform:scale(0.9654,1.0000);transform-origin:0 14px;">Rechnung 1...</span>
<span class="t" style="left:836.80px;top:316px;font-size:16.0px;line-height:16.0px;font-weight:400;color:#242424;transform:scale(0.8543,0.9167);transform-origin:0 13px;">12:41</span>
<svg class="a" style="left:601px;top:311px;" width="22" height="24" viewBox="0 0 22 24" fill="none"><circle cx="11" cy="8" r="6.5" stroke="#424242" stroke-width="1.2"/><path d="M7.2 13.3 V19.6 L11 17.2 L14.8 19.6 V13.3" stroke="#424242" stroke-width="1.2" stroke-linejoin="miter"/></svg>
<svg class="a" style="left:644px;top:310px;" width="24" height="24" viewBox="0 0 24 24" fill="none"><g transform="translate(10.4 12.3) rotate(42) scale(1.08)"><path d="M-3.7 0.8 V-5.5 A3.7 3.7 0 0 1 3.7 -5.5 V5.5 A2.2 2.2 0 0 1 -0.7 5.5 V-4.2" stroke="#424242" stroke-width="1.25" stroke-linecap="round"/></g></svg>
<span class="t" style="left:523.00px;top:360px;font-size:17.0px;line-height:17.0px;font-weight:400;color:#242424;-webkit-text-stroke:0.55px #242424;transform:scale(1.0474,1.0000);transform-origin:0 14px;">debitorenb...</span>
<span class="t" style="left:701.50px;top:360px;font-size:17.0px;line-height:17.0px;font-weight:400;color:#0f548c;-webkit-text-stroke:0.55px #0f548c;transform:scale(0.9470,1.0000);transform-origin:0 14px;">VELUX: Ihre...</span>
<span class="t" style="left:836.80px;top:361px;font-size:16.0px;line-height:16.0px;font-weight:400;color:#242424;transform:scale(0.8518,0.9167);transform-origin:0 13px;">00:56</span>
<svg class="a" style="left:644px;top:355px;" width="24" height="24" viewBox="0 0 24 24" fill="none"><g transform="translate(10.4 12.3) rotate(42) scale(1.08)"><path d="M-3.7 0.8 V-5.5 A3.7 3.7 0 0 1 3.7 -5.5 V5.5 A2.2 2.2 0 0 1 -0.7 5.5 V-4.2" stroke="#424242" stroke-width="1.25" stroke-linecap="round"/></g></svg>
<span class="t" style="left:965.30px;top:400px;font-size:17.0px;line-height:17.0px;font-weight:400;color:#707070;transform:scale(0.9133,1.0000);transform-origin:0 14px;">+1</span>
<span class="t" style="left:523.00px;top:495px;font-size:17.0px;line-height:17.0px;font-weight:400;color:#242424;-webkit-text-stroke:0.55px #242424;transform:scale(0.9872,1.0000);transform-origin:0 14px;">invoice@se...</span>
<span class="t" style="left:701.50px;top:495px;font-size:17.0px;line-height:17.0px;font-weight:400;color:#0f6cbd;-webkit-text-stroke:0.55px #0f6cbd;transform:scale(0.8818,1.0000);transform-origin:0 14px;">SELVE: Rec...</span>
<span class="t" style="left:836.80px;top:496px;font-size:16.0px;line-height:16.0px;font-weight:400;color:#242424;transform:scale(0.8798,0.9167);transform-origin:0 13px;">Mi, 18:04</span>
<svg class="a" style="left:644px;top:489.5px;" width="24" height="24" viewBox="0 0 24 24" fill="none"><g transform="translate(10.4 12.3) rotate(42) scale(1.08)"><path d="M-3.7 0.8 V-5.5 A3.7 3.7 0 0 1 3.7 -5.5 V5.5 A2.2 2.2 0 0 1 -0.7 5.5 V-4.2" stroke="#424242" stroke-width="1.25" stroke-linecap="round"/></g></svg>
<span class="t" style="left:965.30px;top:535px;font-size:17.0px;line-height:17.0px;font-weight:400;color:#707070;transform:scale(0.9133,1.0000);transform-origin:0 14px;">+1</span>
<span class="t" style="left:523.00px;top:584px;font-size:17.0px;line-height:17.0px;font-weight:400;color:#242424;-webkit-text-stroke:0.55px #242424;transform:scale(0.9882,1.0000);transform-origin:0 14px;">Rechnungs...</span>
<span class="t" style="left:701.50px;top:584px;font-size:17.0px;line-height:17.0px;font-weight:400;color:#0f6cbd;-webkit-text-stroke:0.55px #0f6cbd;transform:scale(0.9880,1.0000);transform-origin:0 14px;">Rechnung: ...</span>
<span class="t" style="left:836.80px;top:585px;font-size:16.0px;line-height:16.0px;font-weight:400;color:#242424;transform:scale(0.8768,0.9167);transform-origin:0 13px;">Mi, 16:01</span>
<svg class="a" style="left:644px;top:579px;" width="24" height="24" viewBox="0 0 24 24" fill="none"><g transform="translate(10.4 12.3) rotate(42) scale(1.08)"><path d="M-3.7 0.8 V-5.5 A3.7 3.7 0 0 1 3.7 -5.5 V5.5 A2.2 2.2 0 0 1 -0.7 5.5 V-4.2" stroke="#424242" stroke-width="1.25" stroke-linecap="round"/></g></svg>
<span class="t" style="left:965.30px;top:624px;font-size:17.0px;line-height:17.0px;font-weight:400;color:#707070;transform:scale(0.9133,1.0000);transform-origin:0 14px;">+1</span>
<span class="t" style="left:523.00px;top:673px;font-size:17.0px;line-height:17.0px;font-weight:400;color:#242424;-webkit-text-stroke:0.55px #242424;transform:scale(0.9882,1.0000);transform-origin:0 14px;">Rechnungs...</span>
<span class="t" style="left:701.50px;top:673px;font-size:17.0px;line-height:17.0px;font-weight:400;color:#0f6cbd;-webkit-text-stroke:0.55px #0f6cbd;transform:scale(0.9880,1.0000);transform-origin:0 14px;">Rechnung: ...</span>
<span class="t" style="left:836.80px;top:674px;font-size:16.0px;line-height:16.0px;font-weight:400;color:#242424;transform:scale(0.8768,0.9167);transform-origin:0 13px;">Mi, 16:01</span>
<svg class="a" style="left:644px;top:668.5px;" width="24" height="24" viewBox="0 0 24 24" fill="none"><g transform="translate(10.4 12.3) rotate(42) scale(1.08)"><path d="M-3.7 0.8 V-5.5 A3.7 3.7 0 0 1 3.7 -5.5 V5.5 A2.2 2.2 0 0 1 -0.7 5.5 V-4.2" stroke="#424242" stroke-width="1.25" stroke-linecap="round"/></g></svg>
<span class="t" style="left:965.30px;top:713px;font-size:17.0px;line-height:17.0px;font-weight:400;color:#707070;transform:scale(0.9133,1.0000);transform-origin:0 14px;">+1</span>
<span class="t" style="left:523.00px;top:762px;font-size:17.0px;line-height:17.0px;font-weight:400;color:#242424;transform:scale(0.9569,1.0000);transform-origin:0 14px;">NoReply@k...</span>
<span class="t" style="left:701.50px;top:762px;font-size:17.0px;line-height:17.0px;font-weight:400;color:#242424;transform:scale(0.9824,1.0000);transform-origin:0 14px;">Kundennum...</span>
<span class="t" style="left:836.80px;top:763px;font-size:16.0px;line-height:16.0px;font-weight:400;color:#242424;transform:scale(0.8874,0.9167);transform-origin:0 13px;">Mi, 14:28</span>
<svg class="a" style="left:644px;top:758.5px;" width="24" height="24" viewBox="0 0 24 24" fill="none"><g transform="translate(10.4 12.3) rotate(42) scale(1.08)"><path d="M-3.7 0.8 V-5.5 A3.7 3.7 0 0 1 3.7 -5.5 V5.5 A2.2 2.2 0 0 1 -0.7 5.5 V-4.2" stroke="#424242" stroke-width="1.25" stroke-linecap="round"/></g></svg>
<span class="t" style="left:965.30px;top:802px;font-size:17.0px;line-height:17.0px;font-weight:400;color:#707070;transform:scale(0.9133,1.0000);transform-origin:0 14px;">+1</span>
<svg class="a" style="left:0;top:0" width="1280" height="969" viewBox="0 0 1280 969"><g fill="none" stroke-linecap="round" stroke-linejoin="round" stroke-width="3.9"><path d="M452.5 277 L266 593.5 L471.5 316.5" stroke="#e8161e"/><path d="M475.3 514.5 L220 728" stroke="#1db23e"/><path d="M479 602.3 L266.6 768 L483 674.9" stroke="#3a3fcf"/></g></svg>
</body></html>
